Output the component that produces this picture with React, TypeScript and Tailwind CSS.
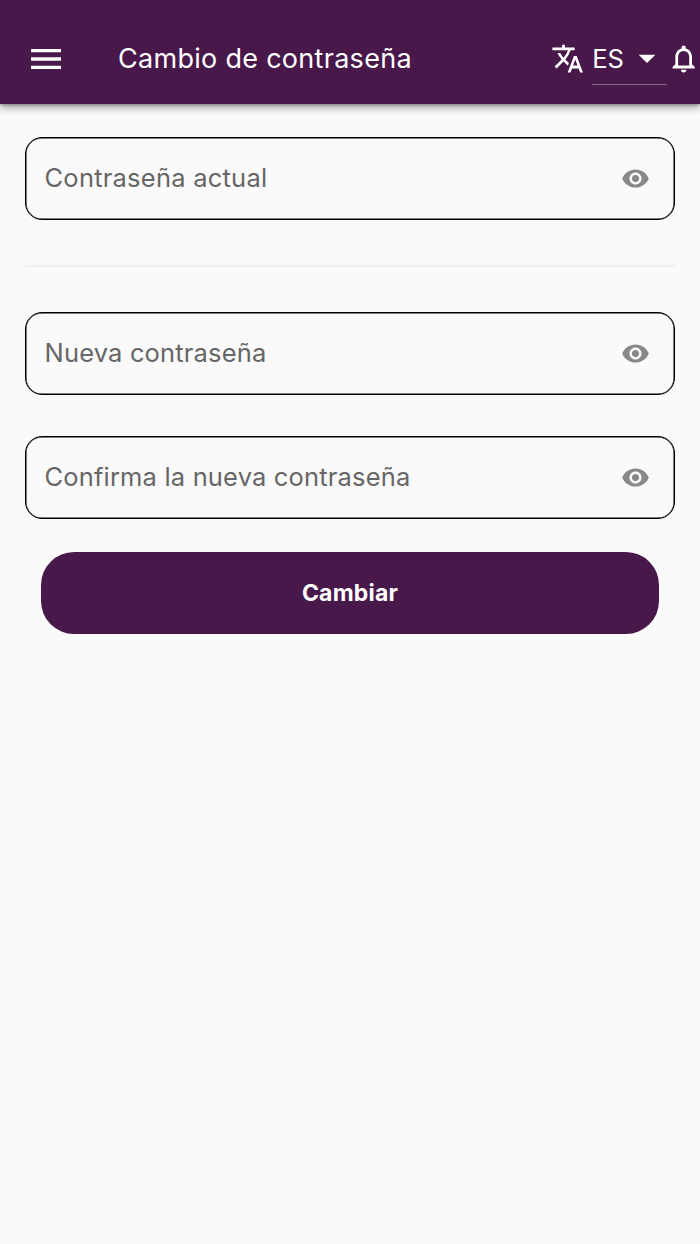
import { MdArrowDropDown, MdMenu, MdNotificationsNone, MdTranslate, MdVisibility } from "react-icons/md";

function PasswordField({ label, tracking }: { label: string; tracking: string }) {
  return (
    <div className="flex h-[83px] items-center justify-between rounded-[17px] border border-black pr-6 pl-[18.5px] shadow-[inset_0_0_0_0.5px_#000]">
      <span className={`pb-px text-[25.5px] leading-8 whitespace-nowrap text-[#666666] ${tracking}`}>{label}</span>
      <button type="button" aria-label="Mostrar contraseña" className="text-[#888888]">
        <MdVisibility size={29} />
      </button>
    </div>
  );
}

export default function App() {
  return (
    <div className="flex h-[1244px] w-[700px] flex-col overflow-hidden bg-[#fafafa] font-['Inter',sans-serif]">
      <header className="flex h-[104px] shrink-0 items-center bg-[#48184b] pt-[13px] pl-[26px] text-white shadow-[0_4px_8px_rgba(0,0,0,0.32),0_1px_3px_rgba(0,0,0,0.3)]">
        <button type="button" aria-label="Menú">
          <MdMenu size={40} />
        </button>
        <h1 className="ml-[52px] w-[433px] pt-px text-[27px] leading-8 font-normal tracking-[0.29px] whitespace-nowrap">
          Cambio de contraseña
        </h1>
        <MdTranslate size={33.33} className="shrink-0" />
        <div className="ml-[7.5px] flex h-[53px] w-[75px] shrink-0 items-center justify-between border-b border-[#866889]">
          <span className="pt-0.5 pl-[0.5px] text-[25.5px] leading-8">ES</span>
          <MdArrowDropDown size={40} className="-mr-[0.5px]" />
        </div>
        <MdNotificationsNone size={33.33} className="shrink-0" />
      </header>
      <main className="flex flex-col px-[25px] pt-[33px]">
        <PasswordField label="Contraseña actual" tracking="tracking-[0.23px]" />
        <hr className="mt-[45px] mb-[45px] h-0.5 border-0 bg-[#f0f0f0]" />
        <PasswordField label="Nueva contraseña" tracking="tracking-[0.17px]" />
        <div className="h-[41px]" />
        <PasswordField label="Confirma la nueva contraseña" tracking="tracking-[0.17px]" />
        <button
          type="button"
          className="mx-4 mt-[33px] h-[82px] rounded-[33px] bg-[#48184b] text-[23px] font-bold tracking-[0.2px] text-white"
        >
          Cambiar
        </button>
      </main>
    </div>
  );
}
